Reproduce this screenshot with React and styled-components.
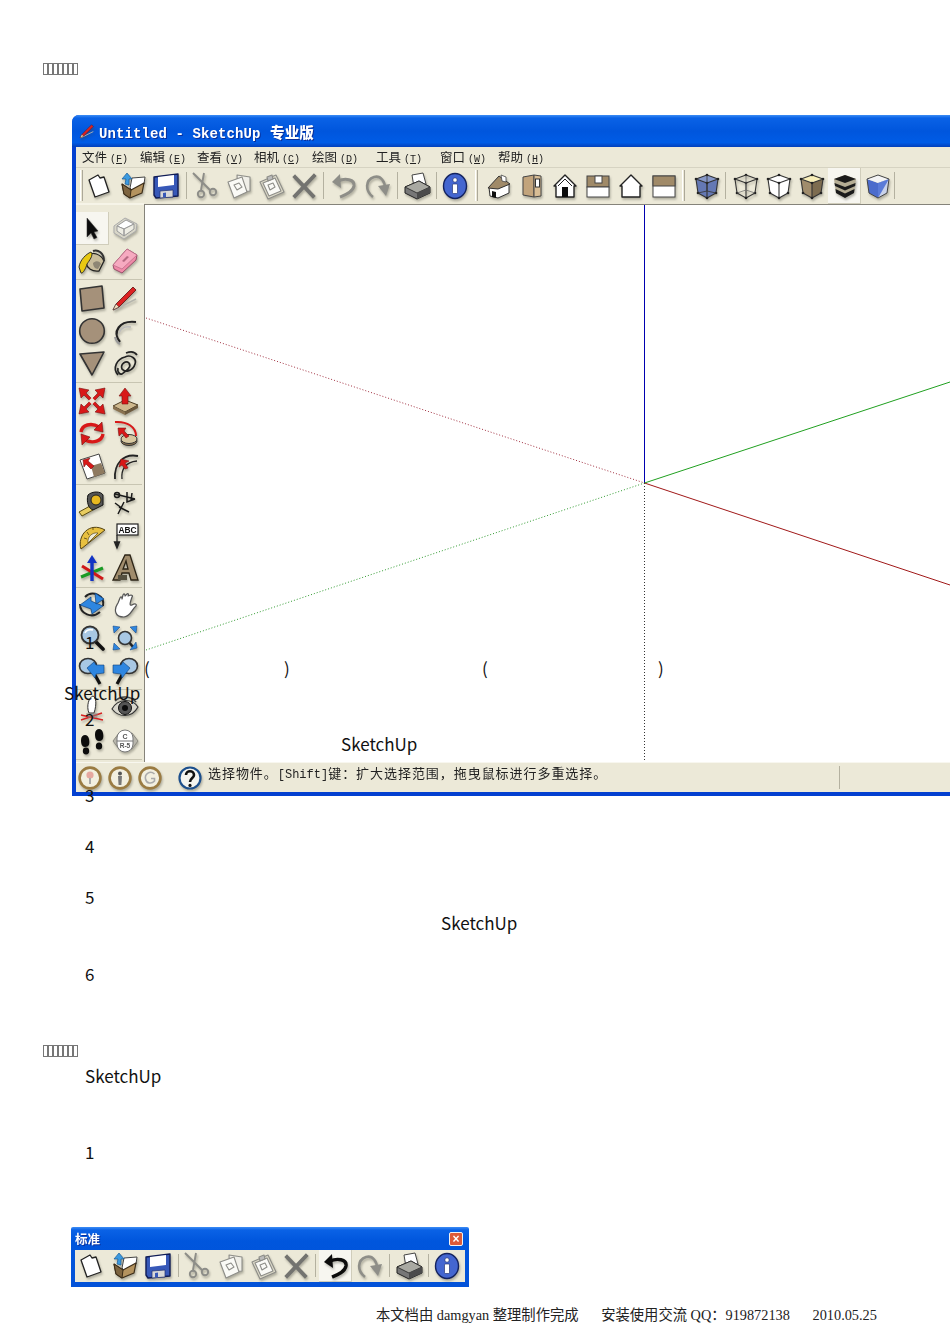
import React from 'react';
import styled, { createGlobalStyle } from 'styled-components';

const Global = createGlobalStyle`
  html, body {
    margin: 0;
    padding: 0;
    background: #fff;
  }
`;

const Page = styled.div`
  width: 950px;
  height: 1344px;
  overflow: hidden;
  background: #fff;
  color: #111;
  font-family: "Noto Sans CJK SC", "Noto Sans", sans-serif;
`;
const Tofu = styled.div`
  display: flex;
  height: 12px;
  margin-top: ${(p) => p.$y || 0}px;
  padding-left: ${(p) => p.$x}px;
  i {
    display: block;
    box-sizing: border-box;
    width: 5px;
    height: 12px;
    border: 1px solid #777;
  }
`;
const TopHeading = styled.div`
  padding-top: 63px;
  height: 115px;
  box-sizing: border-box;
`;
const Window = styled.div`
  margin-left: 72px;
  width: 878px;
  height: 681px;
  display: flex;
  flex-direction: column;
  background: #0340d0;
  border-radius: 7px 0 0 0;
  overflow: hidden;
  filter: blur(0.4px);
`;
const TitleBar = styled.div`
  height: 32px;
  flex: none;
  display: flex;
  align-items: center;
  gap: 4px;
  padding-left: 7px;
  background: linear-gradient(#3d8df5 0, #0a62e6 3px, #0056dd 50%, #005ce6 86%, #0340bb 100%);
  color: #fff;
  font-weight: bold;
  font-size: 14px;
  letter-spacing: 0.1px;
  white-space: pre;
  font-family: "Liberation Mono", "Noto Sans CJK SC", monospace;
  text-shadow: 1px 1px 0 #0a2f9a;
  b {
    font-family: "Noto Sans CJK SC", sans-serif;
    font-size: 14.5px;
    margin-left: 1px;
  }
`;
const MenuBar = styled.div`
  height: 21px;
  flex: none;
  margin-left: 4px;
  display: flex;
  align-items: center;
  padding: 0 0 2px 6px;
  background: #ece9d8;
  border-bottom: 1px solid #d6d3c2;
  box-sizing: border-box;
`;
const MenuItem = styled.div`
  width: ${(p) => p.$w}px;
  font-size: 12.5px;
  color: #222;
  white-space: nowrap;
  span {
    font-family: "Liberation Mono", monospace;
    font-size: 10px;
    margin-left: 3px;
  }
`;
const ToolStrip = styled.div`
  height: 36px;
  flex: none;
  margin-left: 4px;
  display: flex;
  align-items: stretch;
  padding-left: 3px;
  background: #ece9d8;
  box-sizing: border-box;
`;
const Grip = styled.div`
  width: 3px;
  flex: none;
  box-sizing: border-box;
  margin: 2px ${(p) => p.$r}px 3px ${(p) => p.$l}px;
  border-left: 1px solid #fff;
  border-right: 1px solid #aca899;
`;
const Sep = styled.div`
  width: 1px;
  flex: none;
  background: #b4b1a0;
  margin: 4px ${(p) => p.$r}px 5px ${(p) => p.$l}px;
`;
const ToolBtn = styled.div`
  width: 33px;
  flex: none;
  display: flex;
  align-items: center;
  justify-content: center;
  box-sizing: border-box;
  background: ${(p) => (p.$on ? '#f7f6f0' : 'transparent')};
  box-shadow: ${(p) => (p.$on ? 'inset -1px -1px 0 #d0cdbb' : 'none')};
`;
const Middle = styled.div`
  flex: 1;
  min-height: 0;
  margin-left: 4px;
  display: flex;
`;
const SideBar = styled.div`
  width: 68px;
  flex: none;
  background: #ece9d8;
  padding-top: 7px;
  box-sizing: border-box;
  border-top: 2px solid #f6f4e8;
  margin-top: -1px;
`;
const SideGroup = styled.div`
  display: grid;
  grid-template-columns: 33px 33px;
  grid-auto-rows: 32.7px;
  padding-bottom: 2px;
  margin-bottom: 1.4px;
  border-bottom: 1px solid #c8c5b2;
  margin-right: 2px;
  &:last-child {
    margin-bottom: 0;
  }
`;
const SideBtn = styled(ToolBtn)`
  width: 33px;
  padding-right: 1px;
`;
const Viewport = styled.div`
  flex: 1;
  background: #fff;
  border-left: 1px solid #85837a;
  border-top: 1px solid #85837a;
  svg {
    display: block;
  }
`;
const StatusBar = styled.div`
  height: 30px;
  flex: none;
  margin-left: 4px;
  margin-bottom: 4px;
  display: flex;
  align-items: center;
  background: #ece9d8;
  border-top: 1px solid #f8f7ef;
  box-sizing: border-box;
`;
const StatusIcon = styled.div`
  width: 30px;
  flex: none;
  box-sizing: border-box;
  padding-right: 2px;
  display: flex;
  justify-content: center;
`;
const StatusSep = styled(Sep)`
  align-self: stretch;
  margin-top: 3px;
  margin-bottom: 3px;
`;
const StatusText = styled.div`
  font-size: 13px;
  letter-spacing: 0.95px;
  color: #222;
  white-space: pre;
  margin: -10px 0 0 2px;
  width: 631px;
  flex: none;
  span {
    font-family: "Liberation Mono", monospace;
    font-size: 12px;
    letter-spacing: 0;
  }
`;
const Lines = styled.div`
  position: relative;
  z-index: 2;
  margin-top: -167px;
  height: 536px;
  font-family: "Noto Sans CJK SC", sans-serif;
  font-size: 17px;
`;
const Line = styled.div`
  height: 25.5px;
  line-height: 25.5px;
  padding-left: ${(p) => p.$x || 0}px;
  display: flex;
  align-items: center;
  white-space: pre;
`;
const Paren = styled.span`
  width: ${(p) => p.$w}px;
  flex: none;
`;
const FloatBar = styled.div`
  margin: 62px 0 0 71px;
  width: 398px;
  height: 60px;
  box-sizing: border-box;
  border-radius: 2px 2px 0 0;
  display: flex;
  flex-direction: column;
  background: linear-gradient(#3d8df5 0, #0a62e6 3px, #0056dd 14px, #0352d8 100%);
  padding: 0 4px 5px 4px;
  filter: blur(0.4px);
`;
const FloatTitle = styled.div`
  height: 23px;
  flex: none;
  display: flex;
  align-items: center;
  justify-content: space-between;
  color: #fff;
  font-size: 12.5px;
  font-weight: bold;
  padding-right: 2px;
  text-shadow: 1px 1px 0 #0a2f9a;
`;
const CloseBtn = styled.div`
  width: 14px;
  height: 14px;
  box-sizing: border-box;
  border: 1px solid #f2f2f2;
  border-radius: 2px;
  background: #dd5a38;
  color: #fff;
  display: flex;
  align-items: center;
  justify-content: center;
  font: bold 12px/1 "Liberation Sans", sans-serif;
  text-shadow: none;
`;
const FloatStrip = styled.div`
  flex: 1;
  display: flex;
  align-items: stretch;
  background: #ece9d8;
`;
const Footer = styled.div`
  margin-top: 19px;
  padding-left: 376px;
  display: flex;
  gap: 22.7px;
  font-family: "Liberation Serif", "Noto Sans CJK SC", serif;
  font-size: 14.3px;
  line-height: 18px;
  color: #222;
  white-space: pre;
`;

const Ico = styled.svg`
  display: block;
  width: ${(p) => p.$s || 28}px;
  height: ${(p) => p.$s || 28}px;
  flex: none;
  overflow: visible;
  filter: drop-shadow(1px 2px 1px rgba(60, 60, 50, 0.35)) blur(0.3px);
`;

const house = (wall, roof, door) => (
  <>
    <path d="M3 14 L14 3 L25 14 L23 14 L23 25 L5 25 L5 14Z" fill={wall} stroke="#222" strokeWidth="1.4" strokeLinejoin="round" />
    {roof}
    {door}
  </>
);

const cubeEdges = (
  <>
    <path d="M14 3 L25 7 L23 21 L14 26 L5 21 L3 7Z M3 7 L14 11 L25 7 M14 11 L14 26" fill="none" stroke="#333" strokeWidth="1.1" strokeLinejoin="round" />
    <g fill="#222">
      <circle cx="14" cy="3" r="1.3" /><circle cx="25" cy="7" r="1.3" /><circle cx="3" cy="7" r="1.3" />
      <circle cx="14" cy="11" r="1.3" /><circle cx="23" cy="21" r="1.3" /><circle cx="5" cy="21" r="1.3" /><circle cx="14" cy="26" r="1.3" />
    </g>
  </>
);

const moveArrow = "M1 1 L11 3 L8 6 L14 12 L12 14 L6 8 L3 11Z";

const ICONS = {
  new: <path d="M9 25 L23 20 L18 5 L14 6 L12 3 L3 8Z" fill="#fff" stroke="#222" strokeWidth="1.3" strokeLinejoin="round" />,
  open: (
    <>
      <path d="M11 16 L13 6 L26 5 L25 12 L14 19Z" fill="#fff" stroke="#444" />
      <path d="M3 12 L12 18 L25 11 L23 21 L11 26 L5 22Z" fill="#b4935f" stroke="#3a2c18" strokeWidth="1.2" strokeLinejoin="round" />
      <path d="M3 12 L5 22 L11 26 L12 18Z" fill="#7d6440" stroke="#3a2c18" />
      <path d="M8 1 L13 7 L10 7 L10 13 L6 12 L7 7 L3 7Z" fill="#3b9ae0" stroke="#195a96" strokeWidth=".7" />
    </>
  ),
  save: (
    <>
      <path d="M2 5 L26 2 L26 24 L4 26 L2 23Z" fill="#3758b8" stroke="#101c55" strokeWidth="1.4" strokeLinejoin="round" />
      <path d="M6 5 L22 3 L22 13 L6 15Z" fill="#fff" />
      <path d="M8 19 L21 18 L21 25 L8 26Z" fill="#d8d8d8" stroke="#1f2f70" strokeWidth=".7" />
      <path d="M11 21 L14 20.5 L14 25 L11 25.4Z" fill="#3758b8" />
    </>
  ),
  cut: (
    <g fill="none" stroke="#8d8d88" strokeWidth="1.9">
      <path d="M1 1 L18 18 M12 1 L9 18" />
      <circle cx="9" cy="22" r="3.2" />
      <circle cx="21" cy="20" r="3.2" />
    </g>
  ),
  copy: (
    <g stroke="#8d8d88" strokeWidth="1.1" strokeLinejoin="round">
      <path d="M12 3 L25 5 L25 19 L13 20Z" fill="#f0efe8" />
      <path d="M3 10 L17 5 L22 20 L9 26Z" fill="#fafaf6" />
      <path d="M9 13 L14 11 L17 15 L12 18Z M9 13 L12 18 M14 11 L17 15" fill="none" />
    </g>
  ),
  paste: (
    <g stroke="#8d8d88" strokeWidth="1.1" strokeLinejoin="round">
      <path d="M2 10 L18 3 L26 20 L10 27Z" fill="#dcd9c8" />
      <path d="M5 11 L17 6 L23 19 L11 24Z" fill="#fafaf6" />
      <path d="M9 5 L14 3 L15 7 L10 9Z" fill="#bbb" />
      <path d="M10 13 L15 11 L17 15 L12 18Z M12 18 L10 13" fill="none" />
    </g>
  ),
  erase: (
    <g stroke="#737370" strokeWidth="3.8" strokeLinecap="square">
      <path d="M4 5 L22 24" />
      <path d="M23 4 L4 24" />
    </g>
  ),
  undo: (
    <>
      <path d="M8 9 C15 6 25 7 24 14 C23 20 15 23 10 25" fill="none" stroke="#8e8e88" strokeWidth="3" />
      <path d="M10 2 L2 10 L11 16Z" fill="#8e8e88" />
    </>
  ),
  undoOn: (
    <>
      <path d="M8 9 C15 6 25 7 24 14 C23 20 15 23 10 25" fill="none" stroke="#0c0c0c" strokeWidth="3.4" />
      <path d="M10 2 L2 10 L11 16Z" fill="#0c0c0c" />
    </>
  ),
  redo: (
    <>
      <path d="M10 25 C2 19 2 8 11 5 C18 3 22 10 22 16" fill="none" stroke="#8e8e88" strokeWidth="2.6" />
      <path d="M15 14 L27 12 L23 24Z" fill="#8e8e88" />
    </>
  ),
  print: (
    <>
      <path d="M9 3 L20 1 L23 12 L11 15Z" fill="#fff" stroke="#444" />
      <path d="M2 15 L16 9 L27 15 L27 21 L14 27 L2 21Z" fill="#777" stroke="#222" strokeLinejoin="round" />
      <path d="M2 15 L14 21 L27 15 L16 9Z" fill="#a9a9a2" stroke="#222" strokeWidth=".8" />
      <path d="M14 21 L14 27 L27 21 L27 15Z" fill="#4b4b4b" />
    </>
  ),
  info: (
    <>
      <ellipse cx="13" cy="14" rx="11.5" ry="12.5" fill="#4466d0" stroke="#14235f" strokeWidth="1.4" />
      <circle cx="13" cy="8" r="2.2" fill="#fff" stroke="#14235f" strokeWidth=".6" />
      <rect x="10.5" y="12" width="5" height="9.5" rx="1" fill="#fff" stroke="#14235f" strokeWidth=".6" />
    </>
  ),
  iso: (
    <>
      <path d="M4 15 L5 24 L13 26 L24 21 L24 12 L13 16Z" fill="#fff" stroke="#333" strokeLinejoin="round" />
      <path d="M3 16 L14 4 L25 12 L13 17Z" fill="#a08a68" stroke="#333" strokeLinejoin="round" />
      <path d="M7 19 L11 20 L11 26 L7 25Z" fill="#111" />
      <path d="M16 3 L21 5 L21 10 L17 9Z" fill="#fff" stroke="#444" strokeWidth=".8" />
    </>
  ),
  right: (
    <>
      <path d="M5 5 L16 3 L16 25 L5 23Z" fill="#c2a47c" stroke="#444" />
      <path d="M16 3 L23 4 L23 24 L16 25Z" fill="#d8bd95" stroke="#444" />
      <rect x="17.5" y="7" width="4" height="8" fill="#fff" stroke="#333" />
    </>
  ),
  front: house('#fff', <path d="M7 14 L14 7 L21 14" fill="none" stroke="#222" />, <rect x="11" y="15" width="6" height="10" fill="#0c0c0c" />),
  top: (
    <>
      <rect x="3" y="4" width="22" height="11" fill="#a08a68" stroke="#444" />
      <rect x="3" y="15" width="22" height="10" fill="#fff" stroke="#444" />
      <rect x="11" y="4" width="7" height="7" fill="#fff" stroke="#444" />
    </>
  ),
  back: house('#fff', null, null),
  left: (
    <>
      <rect x="3" y="4" width="22" height="21" fill="#fff" stroke="#444" />
      <rect x="3" y="4" width="22" height="10" fill="#a08a68" stroke="#444" />
    </>
  ),
  xray: (
    <>
      <path d="M14 3 L25 7 L23 21 L14 26 L5 21 L3 7Z" fill="#6478b4" />
      <path d="M3 7 L14 11 L25 7 L14 3Z" fill="#8798c8" />
      {cubeEdges}
      <path d="M14 19 L5 21 M14 19 L23 21 M14 19 L14 3" stroke="#333" strokeWidth=".8" />
    </>
  ),
  wire: (
    <>
      {cubeEdges}
      <path d="M14 18 L5 21 M14 18 L23 21 M14 18 L14 3" stroke="#666" strokeWidth=".7" />
    </>
  ),
  hidden: (
    <>
      <path d="M14 3 L25 7 L23 21 L14 26 L5 21 L3 7Z" fill="#fff" />
      {cubeEdges}
    </>
  ),
  shaded: (
    <>
      <path d="M14 11 L25 7 L23 21 L14 26Z" fill="#7d6c50" />
      <path d="M14 11 L3 7 L5 21 L14 26Z" fill="#a08c6c" />
      <path d="M3 7 L14 3 L25 7 L14 11Z" fill="#f8eeb8" />
      {cubeEdges}
    </>
  ),
  mono: (
    <>
      <path d="M14 3 L25 7 L23 21 L14 26 L5 21 L3 7Z" fill="#b5ad94" />
      <path d="M3 7 L14 3 L25 7 L14 11Z M3.5 11 L14 15 L24.5 11 L24.2 14 L14 18.5 L4 14Z M4.5 17 L14 21.5 L23.6 17 L23 21 L14 26 L5 21Z" fill="#1b1b1b" />
    </>
  ),
  texture: (
    <>
      <path d="M14 11 L3 7 L5 21 L14 26Z" fill="#4c6ccc" />
      <path d="M3 7 L14 3 L25 7 L14 11Z" fill="#f4f4f4" />
      <path d="M14 11 L25 7 L23 21 L14 26Z" fill="#c9d2ea" />
      <path d="M14 11 L25 7 L14 26Z" fill="#5b7bd8" />
      <path d="M14 3 L25 7 L23 21 L14 26 L5 21 L3 7Z" fill="none" stroke="#444" />
    </>
  ),
  select: <path d="M9 4 L9 23 L13 19 L16 25 L19 23.5 L16 18 L20 17Z" fill="#0c0c0c" stroke="#333" strokeWidth=".5" />,
  component: (
    <>
      <path d="M3 12 L14 4 L26 10 L25 17 L13 25 L3 19Z" fill="#d8d6c8" stroke="#aaa" />
      <path d="M6 12 L15 6 L23 10 L13 15Z" fill="#fff" stroke="#999" />
      <path d="M6 12 L13 15 L13 22 L6 17Z M13 15 L23 10 L23 15 L13 22Z" fill="#eeede4" stroke="#999" />
    </>
  ),
  paint: (
    <>
      <path d="M10 9 C14 4 23 7 26 14 L21 24 C14 25 9 21 8 16Z" fill="#c9bd9c" stroke="#222" strokeWidth="1.3" />
      <path d="M15 4 C20 2 26 6 26 14" fill="none" stroke="#333" strokeWidth="2" />
      <path d="M1 20 C2 13 8 7 13 5 C16 8 11 14 9 17 C8 21 5 27 3 26Z" fill="#e8c912" stroke="#222" strokeWidth=".9" />
      <path d="M15 16 C18 13 22 14 23 17 L20 22 C17 22 15 19 15 16Z" fill="#8e8674" />
    </>
  ),
  eraser: (
    <>
      <path d="M2 18 L16 2 L26 8 L25 13 L11 26 L3 22Z" fill="#f08aa8" stroke="#99506a" strokeLinejoin="round" />
      <path d="M2 18 L11 22 L26 8 L16 2Z" fill="#f6aac0" stroke="#b56a82" strokeWidth=".7" />
      <path d="M11 14 L16 9 L18 10 L13 15Z" fill="#b56a82" />
    </>
  ),
  rect: <path d="M2 5 L24 2 L26 24 L4 27Z" fill="#a5917a" stroke="#333" strokeWidth="1.6" strokeLinejoin="round" />,
  pencil: (
    <>
      <path d="M3 26 L25 15" stroke="#b5b5ad" strokeWidth="1.6" />
      <path d="M2 26 L5 20 L22 3 L25 6 L8 23Z" fill="#dc2222" stroke="#5a1212" strokeWidth=".8" />
      <path d="M2 26 L5 20 L8 23Z" fill="#f4e0c0" stroke="#333" strokeWidth=".5" />
    </>
  ),
  circle: <circle cx="14" cy="14" r="12.3" fill="#a5917a" stroke="#333" strokeWidth="1.6" />,
  arc: (
    <>
      <path d="M9 25 C1 15 8 3 25 5" fill="none" stroke="#222" strokeWidth="2.2" />
      <path d="M8 16 C10 11 15 9 20 10" fill="none" stroke="#bbb" strokeWidth="1.4" />
      <path d="M4 20 C5 24 7 26 9 27" fill="none" stroke="#999" strokeWidth="2" />
    </>
  ),
  polygon: <path d="M2 5 L26 3 L14 26Z" fill="#a5917a" stroke="#333" strokeWidth="1.6" strokeLinejoin="round" />,
  free: (
    <path d="M7 26 C1 19 6 10 14 8 C20 5 26 10 24 15 C22 22 14 24 11 20 C9 15 15 11 18 14 C21 18 15 22 11 25 C9 26 6 23 7 19 M15 4 C20 2 24 3 26 6" fill="none" stroke="#222" strokeWidth="1.7" />
  ),
  move: (
    <>
      <g fill="#d81818" stroke="#7a1010" strokeWidth=".6" strokeLinejoin="round">
        <path d={moveArrow} />
        <path d={moveArrow} transform="rotate(90 14 14)" />
        <path d={moveArrow} transform="rotate(180 14 14)" />
        <path d={moveArrow} transform="rotate(270 14 14)" />
      </g>
      <rect x="11.5" y="11.5" width="5" height="5" fill="#efe6d6" transform="rotate(45 14 14)" />
    </>
  ),
  push: (
    <>
      <path d="M2 19 L14 13 L27 18 L14 25Z" fill="#cfb98e" stroke="#4c3c22" />
      <path d="M2 19 L14 25 L14 28 L2 22Z" fill="#8a7250" />
      <path d="M14 25 L27 18 L27 21 L14 28Z" fill="#6d5a3e" />
      <path d="M14 1 L20 9 L17 9 L17 17 L11 17 L11 9 L8 9Z" fill="#d81818" stroke="#7a1010" strokeWidth=".6" />
    </>
  ),
  rotate: (
    <g fill="none" stroke="#d81818" strokeWidth="3.4">
      <path d="M3 13 C4 6 13 3 21 8" />
      <path d="M25 15 C24 22 15 25 7 21" />
      <path d="M24 3 L25 13 L16 11Z" fill="#d81818" stroke="#7a1010" strokeWidth=".6" />
      <path d="M4 26 L3 15 L12 18Z" fill="#d81818" stroke="#7a1010" strokeWidth=".6" />
    </g>
  ),
  follow: (
    <>
      <ellipse cx="18" cy="22" rx="8" ry="4.5" fill="#8a7250" stroke="#333" />
      <ellipse cx="18" cy="20" rx="8" ry="4.5" fill="#d8c8a0" stroke="#333" />
      <path d="M4 3 C16 2 25 8 25 17" fill="none" stroke="#d81818" strokeWidth="2" />
      <path d="M7 9 L15 9 L13 12 L18 17 L15 19 L11 14 L8 17Z" fill="#d81818" stroke="#7a1010" strokeWidth=".6" />
    </>
  ),
  scale: (
    <>
      <path d="M2 8 L21 2 L27 21 L9 27Z" fill="#fff" stroke="#444" strokeLinejoin="round" />
      <path d="M13 14 L23 11 L27 21 L16 25Z" fill="#8e7a60" />
      <path d="M5 8 L12 6 L10 9 L16 14 L13 17 L8 12 L6 15Z" fill="#d81818" stroke="#7a1010" strokeWidth=".6" />
    </>
  ),
  offset: (
    <>
      <path d="M4 27 C3 12 12 1 27 4" fill="none" stroke="#222" strokeWidth="1.8" />
      <path d="M11 27 C10 18 14 10 26 9" fill="none" stroke="#222" strokeWidth="1.3" />
      <path d="M10 7 L18 9 L14 11 L17 16 L14 17 L11 13 L8 15Z" fill="#d81818" stroke="#7a1010" strokeWidth=".6" />
    </>
  ),
  tape: (
    <>
      <path d="M1 23 L12 17 L15 21 L4 27Z" fill="#e8cc60" stroke="#5a4a10" />
      <path d="M10 6 C14 2 23 2 25 6 L25 16 L15 21 C11 20 8 13 10 6Z" fill="#555" stroke="#111" />
      <circle cx="18" cy="11" r="5" fill="#e8b820" stroke="#222" />
    </>
  ),
  dim: (
    <g fill="none" stroke="#1a1a1a" strokeWidth="1.5">
      <path d="M4 5 L24 10 M16 3 L16 13 L24 10 M21 4 L20 11" />
      <path d="M13 13 L7 25 M4 14 L12 20 M8 18 L18 23" />
      <circle cx="6" cy="6" r="2.5" />
    </g>
  ),
  proto: (
    <>
      <path d="M3 27 C-1 14 11 -1 27 8Z" fill="#e8c040" stroke="#544210" strokeLinejoin="round" />
      <path d="M10 21 C9 15 14 10 20 11Z" fill="#ece9d8" stroke="#544210" strokeWidth=".7" />
      <path d="M6 16 L9 17 M9 10 L11 13 M15 5 L15 8" stroke="#544210" strokeWidth=".8" />
    </>
  ),
  text: (
    <>
      <rect x="6" y="2" width="21" height="11" fill="#fff" stroke="#222" strokeWidth="1.2" />
      <text x="16.5" y="10.6" textAnchor="middle" fontFamily="Liberation Sans" fontWeight="bold" fontSize="8.4" fill="#111">ABC</text>
      <path d="M6 13 L6 24 M3.5 20 L6 26 L8.5 20Z" stroke="#222" strokeWidth="1.3" fill="#222" />
    </>
  ),
  axes: (
    <>
      <path d="M3 23 L25 14" stroke="#1a9a24" strokeWidth="3.2" />
      <path d="M4 12 L25 25" stroke="#d01818" strokeWidth="3" />
      <path d="M14 27 L14 6" stroke="#1233c4" strokeWidth="3.4" />
      <path d="M14 1 L19 9 L9 9Z" fill="#1233c4" />
    </>
  ),
  text3d: (
    <>
      <path d="M14 1 L19 1 L27 26 L20 26 L18 19 L11 19 L9 26 L2 26Z M12 15 L17 15 L15 7Z" fill="#a08c6c" stroke="#2c2416" strokeWidth="1.3" fillRule="evenodd" />
      <path d="M7 21 L16 21 L16 26 L7 26Z" fill="#55503f" />
    </>
  ),
  orbit: (
    <>
      <path d="M7 6 C14 -1 27 4 25 15" fill="none" stroke="#222" strokeWidth="2" />
      <path d="M22 21 C14 28 2 23 2 13" fill="none" stroke="#222" strokeWidth="2" />
      <path d="M2 14 L13 6 L13 10 L25 15 L14 23 L13 18Z" fill="#2e86e0" stroke="#0e3f7a" strokeWidth=".7" />
      <path d="M17 2 L26 8 L18 13Z" fill="#2e86e0" stroke="#0e3f7a" strokeWidth=".7" />
    </>
  ),
  pan: (
    <path d="M5 22 C3 17 6 14 7 12 L9 7 C10 5 11 6 11 8 L12 4 C13 2 14 3 14 5 L16 3 C17 2 18 3 17 5 L20 4 C21 4 22 5 21 6 C19 12 18 15 21 14 C24 12 26 13 25 15 C21 18 20 25 13 26 C9 26 6 25 5 22Z" fill="#fff" stroke="#555" strokeWidth="1.2" strokeLinejoin="round" />
  ),
  zoom: (
    <>
      <path d="M17 17 L25 25" stroke="#111" strokeWidth="3.6" strokeLinecap="round" />
      <circle cx="12" cy="11" r="8.5" fill="#a8c8e4" stroke="#333" strokeWidth="1.8" />
      <path d="M7 9 C8 6 12 5 15 6" fill="none" stroke="#fff" strokeWidth="1.6" />
    </>
  ),
  extents: (
    <>
      <path d="M17 17 L23 24" stroke="#222" strokeWidth="2.6" />
      <circle cx="14" cy="14" r="6.5" fill="#a8c8e4" stroke="#333" strokeWidth="1.6" />
      <g fill="#2e86e0" stroke="#0e3f7a" strokeWidth=".5">
        <path d="M2 2 L9 3 L3 9Z" /><path d="M26 2 L19 3 L25 9Z" /><path d="M2 26 L3 19 L9 25Z" /><path d="M26 24 L19 26 L25 18Z" />
      </g>
    </>
  ),
  prev: (
    <>
      <path d="M17 18 L22 27" stroke="#111" strokeWidth="3.2" />
      <ellipse cx="10" cy="9" rx="8.5" ry="7.5" fill="#a8c8e4" stroke="#333" strokeWidth="1.6" />
      <path d="M9 11 L16 5 L18 8 L26 8 L26 16 L18 17 L17 21Z" fill="#2e86e0" stroke="#0e3f7a" strokeWidth=".6" />
    </>
  ),
  next: (
    <>
      <path d="M11 18 L6 27" stroke="#111" strokeWidth="3.2" />
      <ellipse cx="18" cy="9" rx="8.5" ry="7.5" fill="#a8c8e4" stroke="#333" strokeWidth="1.6" />
      <path d="M19 11 L12 5 L10 8 L2 8 L2 16 L10 17 L11 21Z" fill="#2e86e0" stroke="#0e3f7a" strokeWidth=".6" />
    </>
  ),
  camera: (
    <>
      <path d="M11 19 C8 12 11 3 15 2 C18 3 19 10 16 19Z" fill="#fff" stroke="#333" />
      <path d="M3 21 L25 26 M3 26 L24 19" stroke="#d82020" strokeWidth="1.5" />
      <path d="M8 19 L20 19 L19 24 L10 24Z" fill="#888" opacity=".5" />
    </>
  ),
  look: (
    <>
      <path d="M1 15 C7 4 21 4 27 13 C21 24 8 24 1 15Z" fill="#d8d6cc" stroke="#333" strokeWidth="1.2" />
      <circle cx="14" cy="14" r="6.5" fill="#555" stroke="#111" />
      <circle cx="14" cy="14" r="3" fill="#0c0c0c" />
      <path d="M4 7 C10 1 20 2 25 8" fill="none" stroke="#444" strokeWidth="1.6" />
    </>
  ),
  walk: (
    <g fill="#0c0c0c">
      <path d="M3 13 C3 7 10 6 11 12 C12 17 11 20 7 20 C4 20 3 17 3 13Z" />
      <ellipse cx="8" cy="24" rx="3.2" ry="3.4" />
      <path d="M17 7 C17 1 24 0 25 6 C26 11 25 14 21 14 C18 14 17 11 17 7Z" />
      <ellipse cx="21" cy="19" rx="3.2" ry="3.6" />
    </g>
  ),
  section: (
    <>
      <path d="M2 14 L8 6 L21 6 L27 14 L21 22 L8 22Z" fill="#b8b6ac" stroke="#8c8a80" />
      <rect x="6" y="3" width="16" height="22" rx="8" fill="#fff" stroke="#777" />
      <path d="M6 14 L22 14" stroke="#777" />
      <text x="14" y="11.5" textAnchor="middle" fontFamily="Liberation Sans" fontWeight="bold" fontSize="7" fill="#555">C</text>
      <text x="14" y="21" textAnchor="middle" fontFamily="Liberation Sans" fontWeight="bold" fontSize="6.5" fill="#555">R-5</text>
    </>
  ),
  ringA: (
    <>
      <circle cx="14" cy="14" r="10.4" fill="#f2efe0" stroke="#9a7b42" strokeWidth="2.6" />
      <circle cx="14" cy="11" r="3.6" fill="#e6a8a0" /><path d="M13 14 L15 14 L15 20 L13 20Z" fill="#aaa" />
    </>
  ),
  ringB: (
    <>
      <circle cx="14" cy="14" r="10.4" fill="#f2efe0" stroke="#9a7b42" strokeWidth="2.6" />
      <circle cx="14" cy="9.5" r="2" fill="#555" /><path d="M12 12 L16 12 L15.4 21 L12.6 21Z" fill="#777" />
    </>
  ),
  ringC: (
    <>
      <circle cx="14" cy="14" r="10.4" fill="#f2efe0" stroke="#9a7b42" strokeWidth="2.6" />
      <path d="M18.5 10 C14 6 8.5 10 9.5 15 C10.5 20 16 20 18.5 17 L18.5 14.5 L15 14.5" fill="none" stroke="#aaa" strokeWidth="1.6" />
    </>
  ),
  help: (
    <>
      <circle cx="14" cy="14" r="10.5" fill="#f4f4ef" stroke="#1c4f8c" strokeWidth="2.2" />
      <path d="M10 11 C10 6 18 6 18 11 C18 14 14 14 14 18" fill="none" stroke="#111" strokeWidth="2.6" />
      <circle cx="14" cy="21.4" r="1.6" fill="#111" />
    </>
  ),
};

const Icon = ({ n, s }) => (
  <Ico viewBox="0 0 28 28" $s={s}>
    {ICONS[n]}
  </Ico>
);

const Btn = ({ n, on }) => (
  <ToolBtn $on={on}>
    <Icon n={n} />
  </ToolBtn>
);

const SIDE = [
  [['select', 'component'], ['paint', 'eraser']],
  [['rect', 'pencil'], ['circle', 'arc'], ['polygon', 'free']],
  [['move', 'push'], ['rotate', 'follow'], ['scale', 'offset']],
  [['tape', 'dim'], ['proto', 'text'], ['axes', 'text3d']],
  [['orbit', 'pan'], ['zoom', 'extents'], ['prev', 'next']],
  [['camera', 'look'], ['walk', 'section']],
];

const MENUS = [
  ['文件', 'F', 58], ['编辑', 'E', 57], ['查看', 'V', 57], ['相机', 'C', 58],
  ['绘图', 'D', 64], ['工具', 'T', 64], ['窗口', 'W', 58], ['帮助', 'H', 50],
];

// first bar is shared between the main window and the floating palette
const StandardTools = ({ undoOn }) => (
  <>
    <Btn n="new" /><Btn n="open" /><Btn n="save" />
    <Sep $l={4} $r={2} />
    <Btn n="cut" /><Btn n="copy" /><Btn n="paste" /><Btn n="erase" />
    <Sep $l={2} $r={3} />
    <Btn n={undoOn ? 'undoOn' : 'undo'} on={undoOn} /><Btn n="redo" />
    <Sep $l={4} $r={2} />
    <Btn n="print" />
    <Sep $l={3} $r={2} />
    <Btn n="info" />
  </>
);

export default function App() {
  return (
    <Page>
      <Global />
      <TopHeading>
        <Tofu $x={43}>{[0, 1, 2, 3, 4, 5, 6].map((i) => <i key={i} />)}</Tofu>
      </TopHeading>
      <Window>
        <TitleBar>
          <Icon n="pencil" s={16} />
          <span>Untitled - SketchUp <b>专业版</b></span>
        </TitleBar>
        <MenuBar>
          {MENUS.map(([label, key, w]) => (
            <MenuItem $w={w} key={key}>{label}<span>(<u>{key}</u>)</span></MenuItem>
          ))}
        </MenuBar>
        <ToolStrip>
          <Grip $l={1} $r={0} />
          <StandardTools />
          <Grip $l={3} $r={4} />
          <Btn n="iso" /><Btn n="right" /><Btn n="front" /><Btn n="top" /><Btn n="back" /><Btn n="left" />
          <Grip $l={2} $r={5} />
          <Btn n="xray" />
          <Sep $l={2} $r={3} />
          <Btn n="wire" /><Btn n="hidden" /><Btn n="shaded" /><Btn n="mono" on /><Btn n="texture" />
          <Sep $l={0} $r={0} />
        </ToolStrip>
        <Middle>
          <SideBar>
            {SIDE.map((group, g) => (
              <SideGroup key={g}>
                {group.flat().map((n) => (
                  <SideBtn key={n} $on={n === 'select'}><Icon n={n} /></SideBtn>
                ))}
              </SideGroup>
            ))}
          </SideBar>
          <Viewport>
            <svg width="805" height="557" viewBox="0 0 805 557">
              <path d="M1 113 L499.5 278" stroke="#a03040" strokeDasharray="1 2" />
              <path d="M1 445 L499.5 278" stroke="#309a30" strokeDasharray="1 2" />
              <path d="M499.5 278 L499.5 557" stroke="#333" strokeDasharray="1 2" />
              <path d="M499.5 0 L499.5 278" stroke="#0000b0" />
              <path d="M499.5 278 L805 380" stroke="#a01818" />
              <path d="M499.5 278 L805 177" stroke="#20a020" />
            </svg>
          </Viewport>
        </Middle>
        <StatusBar>
          <StatusIcon><Icon n="ringA" /></StatusIcon>
          <StatusIcon><Icon n="ringB" /></StatusIcon>
          <StatusIcon><Icon n="ringC" /></StatusIcon>
          <Sep $l={6} $r={3} />
          <StatusIcon><Icon n="help" /></StatusIcon>
          <StatusText>选择物件。<span>[Shift]</span>键：扩大选择范围，拖曳鼠标进行多重选择。</StatusText>
          <StatusSep $l={0} $r={0} />
        </StatusBar>
      </Window>
      <Lines>
        <Line $x={85}>1</Line>
        <Line $x={144}><Paren $w={140}>(</Paren><Paren $w={198}>)</Paren><Paren $w={176}>(</Paren><Paren $w={6}>)</Paren></Line>
        <Line $x={64}>SketchUp</Line>
        <Line $x={85}>2</Line>
        <Line $x={341}>SketchUp</Line>
        <Line />
        <Line $x={85}>3</Line>
        <Line />
        <Line $x={85}>4</Line>
        <Line />
        <Line $x={85}>5</Line>
        <Line $x={441}>SketchUp</Line>
        <Line />
        <Line $x={85}>6</Line>
        <Line />
        <Line />
        <Line><Tofu $x={43} $y={3}>{[0, 1, 2, 3, 4, 5, 6].map((i) => <i key={i} />)}</Tofu></Line>
        <Line $x={85}>SketchUp</Line>
        <Line />
        <Line />
        <Line $x={85}>1</Line>
      </Lines>
      <FloatBar>
        <FloatTitle>
          <span>标准</span>
          <CloseBtn>×</CloseBtn>
        </FloatTitle>
        <FloatStrip>
          <StandardTools undoOn />
        </FloatStrip>
      </FloatBar>
      <Footer>
        <span>本文档由 damgyan 整理制作完成</span>
        <span>安装使用交流 QQ：919872138</span>
        <span>2010.05.25</span>
      </Footer>
    </Page>
  );
}
